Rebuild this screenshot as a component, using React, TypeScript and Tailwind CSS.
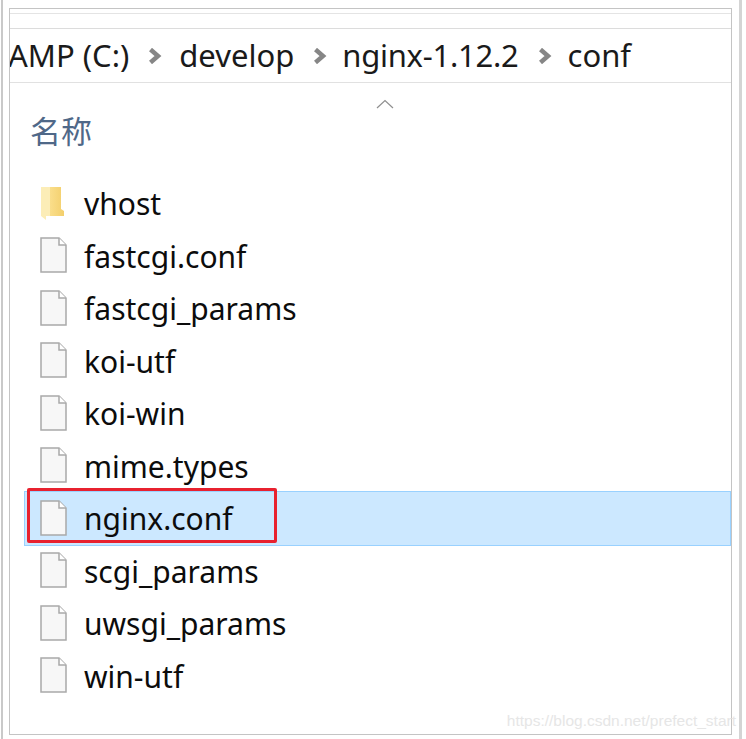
import React from "react";

const files = [
  { name: "fastcgi.conf" },
  { name: "fastcgi_params" },
  { name: "koi-utf" },
  { name: "koi-win" },
  { name: "mime.types" },
  { name: "nginx.conf", selected: true },
  { name: "scgi_params" },
  { name: "uwsgi_params" },
  { name: "win-utf" },
];

function FileIcon() {
  return (
    <svg width="27" height="36" viewBox="0 0 27 36" className="shrink-0">
      <path d="M1 1H19L26 8V35H1Z" fill="#f7f7f7" stroke="#a9a9a9" strokeWidth="1.5" />
      <path d="M19 1V8H26" fill="#ffffff" stroke="#a9a9a9" strokeWidth="1.5" />
    </svg>
  );
}

function FolderIcon() {
  return (
    <svg width="24" height="34" viewBox="0 0 24 34" className="shrink-0">
      <defs>
        <linearGradient id="folderFill" x1="0" y1="0" x2="1" y2="0">
          <stop offset="0" stopColor="#fbe08f" />
          <stop offset="1" stopColor="#f3cf6c" />
        </linearGradient>
      </defs>
      <path d="M8 1H21V23L24 25V30H8Z" fill="url(#folderFill)" />
      <path d="M1 1H10V30H6V34L1 30Z" fill="#fcedb7" />
    </svg>
  );
}

function Chevron() {
  return (
    <svg width="14" height="16" viewBox="0 0 14 16" className="shrink-0">
      <path d="M2.5 1.5L10 8L2.5 14.5" fill="none" stroke="#868686" strokeWidth="4.5" />
    </svg>
  );
}

function Row({ name, selected, folder }: { name: string; selected?: boolean; folder?: boolean }) {
  return (
    <div
      className={`relative flex items-center pl-[16px] ${
        selected
          ? "mt-[-2px] h-[54.5px] bg-[#cce8ff] pt-[2px] outline outline-1 -outline-offset-1 outline-[#99d1ff]"
          : "h-[52.5px]"
      }`}
    >
      <div className="mb-[3px] flex w-[44px] justify-start">{folder ? <FolderIcon /> : <FileIcon />}</div>
      <span className="text-[30px] leading-none text-[#0c0c0c]">{name}</span>
      {selected && (
        <div className="absolute left-[3px] top-[-3px] h-[55px] w-[250px] rounded-[2px] border-[3px] border-[#e8212f]" />
      )}
    </div>
  );
}

export default function App() {
  return (
    <div
      className="relative h-[739px] w-[746px] overflow-hidden bg-white p-[8px_14px_4px_9px]"
      style={{ fontFamily: '"Noto Sans", "Noto Sans CJK SC", sans-serif' }}
    >
      <div className="absolute bottom-0 left-[1px] top-0 w-[2px] bg-[#c9c9c9]" />
      <div className="absolute bottom-0 right-[4px] top-0 w-[3px] bg-[#d4d4d4]" />
      <div className="h-full border border-[#c4c4c4]">
        <div className="h-[5px] border-b border-[#e4e4e4]" />
        <div className="h-[15px] border-b border-[#dcdcdc]" />
        <div className="flex h-[54px] items-center overflow-hidden border-b border-[#e1e1e1] text-[31px] text-[#1a1a1a]">
          <span className="ml-[-2px] shrink-0">AMP (C:)</span>
          <span className="ml-[19px]"><Chevron /></span>
          <span className="ml-[17px]">develop</span>
          <span className="ml-[19px]"><Chevron /></span>
          <span className="ml-[15px] tracking-[-0.25px]">nginx-1.12.2</span>
          <span className="ml-[19px]"><Chevron /></span>
          <span className="ml-[16px]">conf</span>
        </div>
        <div className="relative h-[95px]">
          <svg width="18" height="10" viewBox="0 0 18 10" className="absolute left-[366px] top-[16px]">
            <path d="M1 9L9 1.5L17 9" fill="none" stroke="#8f8f8f" strokeWidth="1.2" />
          </svg>
          <div className="pl-[20px] pt-[33px] text-[31px] leading-none text-[#4f6888]">名称</div>
        </div>
        <div className="pl-[14px]">
          <Row name="vhost" folder />
          {files.map((f) => (
            <Row key={f.name} name={f.name} selected={f.selected} />
          ))}
        </div>
      </div>
      <div
        className="absolute right-[10px] top-[713px] text-[15.5px] leading-none text-[#e6e6e6]"
        style={{ fontFamily: '"Liberation Sans", sans-serif' }}
      >
        https://blog.csdn.net/prefect_start
      </div>
    </div>
  );
}
